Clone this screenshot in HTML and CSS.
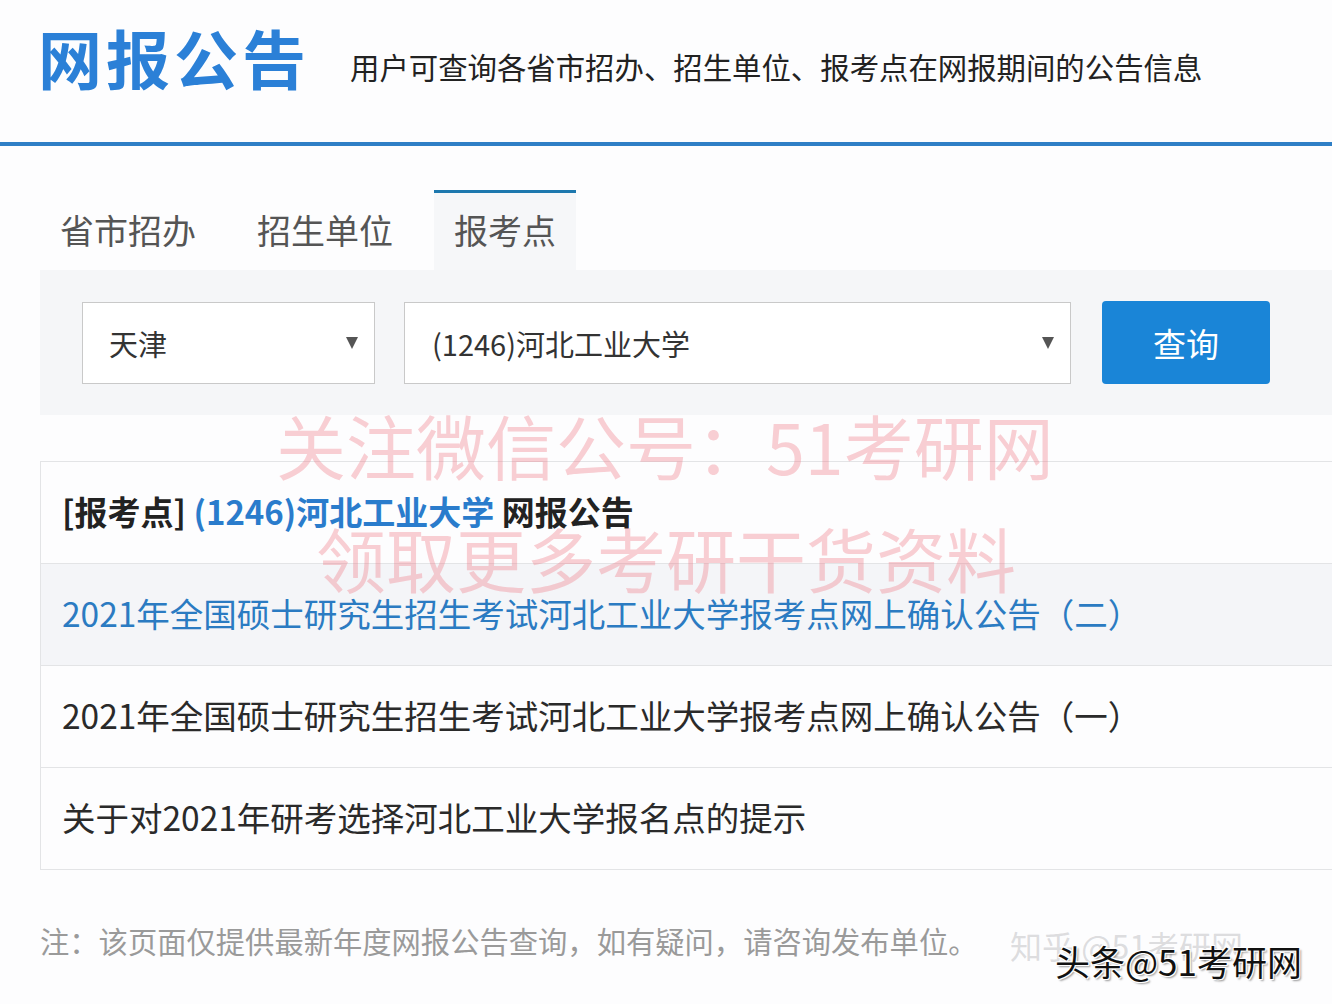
FILE: index.html
```html
<!DOCTYPE html>
<html lang="zh-CN">
<head>
<meta charset="utf-8">
<title>网报公告</title>
<link rel="stylesheet" href="styles.css">
</head>
<body>
<div class="page">
  <header class="header">
    <h1 class="title">网报公告</h1>
    <p class="subtitle">用户可查询各省市招办、招生单位、报考点在网报期间的公告信息</p>
  </header>

  <nav class="tabs">
    <div class="tab">省市招办</div>
    <div class="tab">招生单位</div>
    <div class="tab active">报考点</div>
  </nav>

  <section class="search">
    <div class="select select-prov"><span>天津</span><span class="arrow"></span></div>
    <div class="select select-unit"><span>(1246)河北工业大学</span><span class="arrow"></span></div>
    <button class="btn">查询</button>
  </section>

  <section class="list">
    <div class="row head">[报考点] <span class="blue">(1246)河北工业大学</span> 网报公告</div>
    <div class="row alt link">2021年全国硕士研究生招生考试河北工业大学报考点网上确认公告（二）</div>
    <div class="row">2021年全国硕士研究生招生考试河北工业大学报考点网上确认公告（一）</div>
    <div class="row">关于对2021年研考选择河北工业大学报名点的提示</div>
  </section>

  <p class="note">注：该页面仅提供最新年度网报公告查询，如有疑问，请咨询发布单位。</p>

  <div class="wm wm1">关注微信公号：51考研网</div>
  <div class="wm wm2">领取更多考研干货资料</div>
  <div class="mark-zhihu">知乎 @51考研网</div>
  <div class="mark-toutiao">头条@51考研网</div>
</div>
</body>
</html>
```

FILE: styles.css
```css
html, body {
  margin: 0;
  padding: 0;
  background: #fdfdfe;
}
body {
  font-family: "Noto Sans CJK SC", "Noto Sans", sans-serif;
  color: #333;
  width: 1332px;
  height: 1004px;
  overflow: hidden;
}
.page {
  position: relative;
  height: 1004px;
}
.header {
  display: flex;
  align-items: center;
  height: 142px;
  padding-left: 38px;
  border-bottom: 4px solid #2f7fc6;
}
.title {
  margin: 0;
  font-size: 64px;
  font-weight: 700;
  letter-spacing: 4px;
  color: #2b80d7;
  line-height: 1;
  position: relative;
  top: -15px;
}
.subtitle {
  margin: 0 0 0 40px;
  font-size: 29.4px;
  color: #222;
  line-height: 1;
  position: relative;
  top: -4px;
}
.tabs {
  display: flex;
  margin-top: 44px;
  padding-left: 40px;
  gap: 21px;
}
.tab {
  height: 77px;
  border-top: 3px solid transparent;
  padding: 0 20px;
  font-size: 34px;
  color: #555;
  line-height: 74px;
}
.tab.active {
  border-top-color: #1d78ae;
  background: #f6f7f9;
}
.search {
  display: flex;
  align-items: center;
  margin-left: 40px;
  height: 145px;
  padding-left: 42px;
  background: #f5f6f8;
  box-sizing: border-box;
}
.select {
  display: flex;
  align-items: center;
  justify-content: space-between;
  height: 82px;
  box-sizing: border-box;
  border: 1px solid #c9c9c9;
  background: #fff;
  font-size: 29px;
  color: #333;
  padding: 0 16px 0 26px;
}
.select-prov {
  width: 293px;
}
.select-unit {
  width: 667px;
  margin-left: 29px;
  padding-left: 27px;
}
.arrow {
  width: 0;
  height: 0;
  border-left: 6px solid transparent;
  border-right: 6px solid transparent;
  border-top: 12px solid #555;
}
.btn {
  margin-left: 31px;
  width: 168px;
  height: 83px;
  border: none;
  border-radius: 4px;
  background: #1a85d7;
  color: #fff;
  font-family: inherit;
  font-size: 33px;
  padding: 0;
}
.list {
  margin: 46px 0 0 40px;
  border: 1px solid #e3e4e6;
  border-right: none;
}
.row {
  height: 101px;
  line-height: 98px;
  padding-left: 21px;
  font-size: 33.5px;
  color: #2a2a2a;
  border-top: 1px solid #e3e4e6;
  white-space: nowrap;
}
.row:first-child {
  border-top: none;
}
.row.head {
  font-size: 33px;
  font-weight: 700;
  color: #222;
}
.blue {
  color: #2a7ccc;
}
.row.alt {
  background: #f4f5f8;
}
.row.link {
  color: #2b7bc2;
}
.note {
  margin: 56px 0 0 40px;
  font-size: 29.3px;
  color: #9a9a9a;
  line-height: 1;
}
.wm {
  position: absolute;
  font-size: 70px;
  line-height: 1;
  color: rgba(238, 110, 120, 0.32);
  white-space: nowrap;
  pointer-events: none;
}
.wm1 {
  left: 276px;
  top: 410px;
}
.wm2 {
  left: 316px;
  top: 523px;
}
.mark-zhihu {
  position: absolute;
  left: 1010px;
  top: 922px;
  font-size: 32px;
  color: rgba(180, 180, 185, 0.45);
  white-space: nowrap;
}
.mark-toutiao {
  position: absolute;
  left: 1055px;
  top: 935px;
  font-size: 35px;
  color: #111;
  white-space: nowrap;
  text-shadow: 1px 1px 0 #fff, -1px -1px 0 #fff, 1px -1px 0 #fff, -1px 1px 0 #fff, 2px 2px 2px rgba(0,0,0,0.4);
}
```
